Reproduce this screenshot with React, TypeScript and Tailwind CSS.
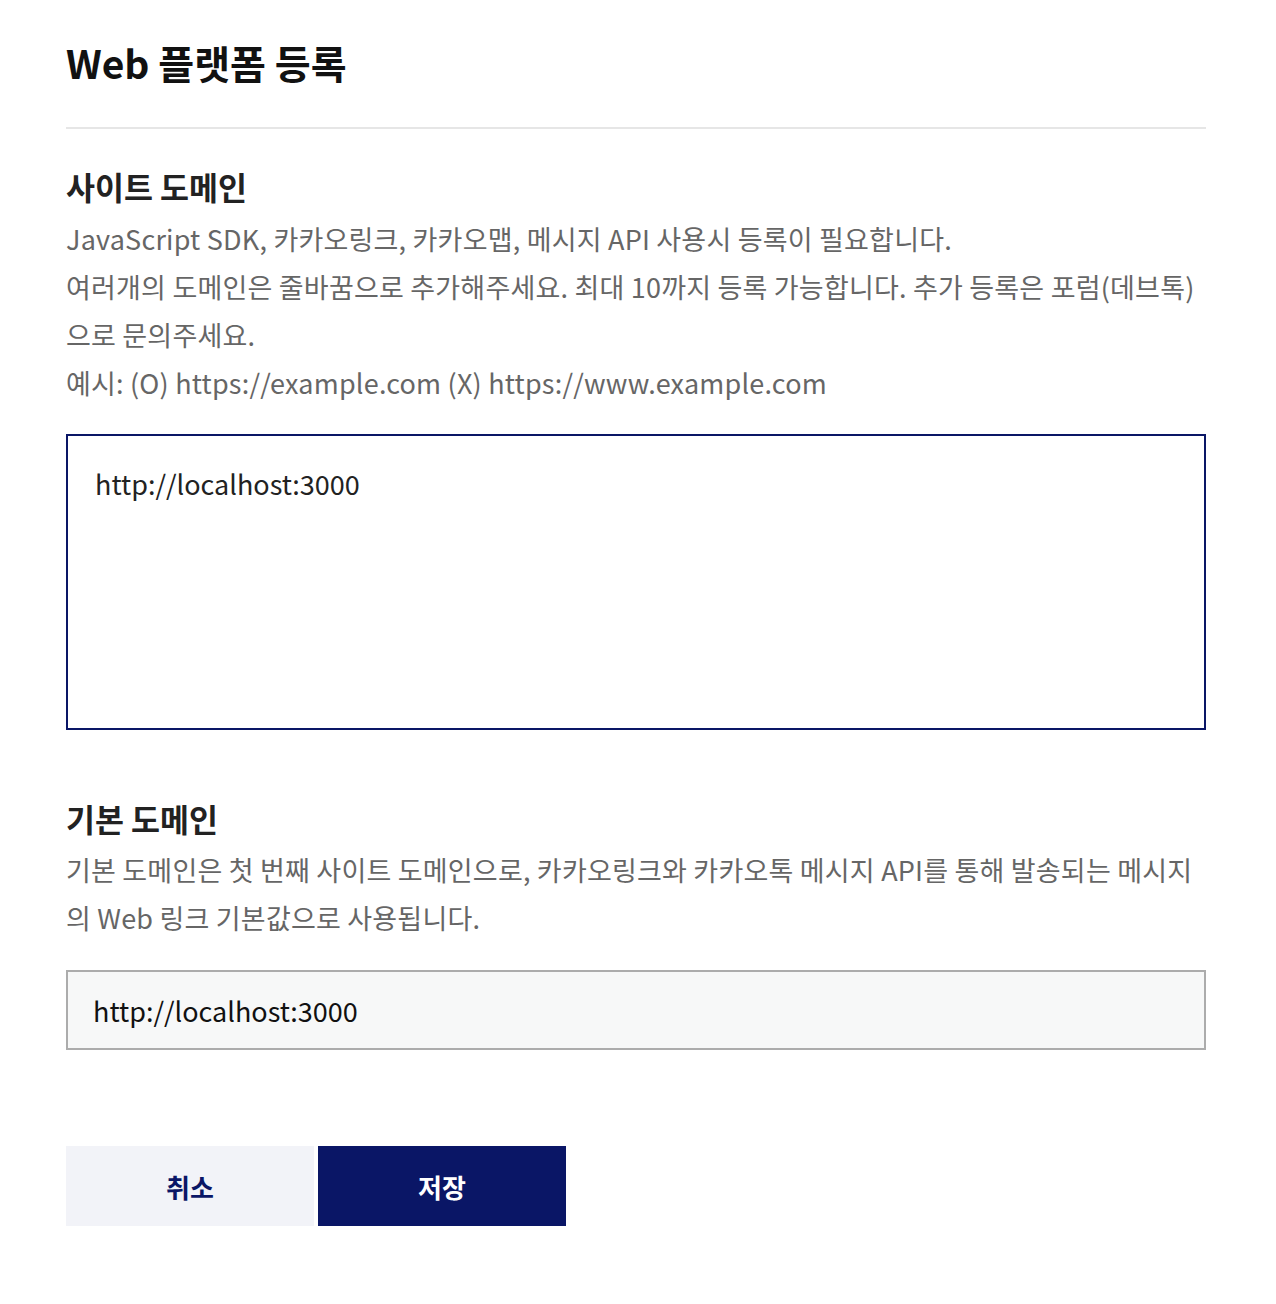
import { useState } from 'react'

const font = { fontFamily: '"Noto Sans CJK KR", "Noto Sans", sans-serif' }

export default function App() {
  const [sites, setSites] = useState('http://localhost:3000')
  const [defaultDomain, setDefaultDomain] = useState('http://localhost:3000')

  return (
    <div className="min-h-[1304px] w-[1276px] bg-white" style={font}>
      <div className="px-[66px] pt-9 w-[1272px]">
        <h1 className="text-[39px] leading-[52px] font-bold text-[#111]">
          Web 플랫폼 등록
        </h1>
        <div className="mt-[39px] h-[2px] bg-[#e6e6e6]" />

        <h2 className="mt-[37px] text-[31.5px] leading-[40px] font-bold text-[#222]">사이트 도메인</h2>
        <div className="mt-[9px] text-[27px] leading-[48px] text-[#666] tracking-[0.2px]">
          <p>JavaScript SDK, 카카오링크, 카카오맵, 메시지 API 사용시 등록이 필요합니다.</p>
          <p>
            여러개의 도메인은 줄바꿈으로 추가해주세요. 최대 10까지 등록 가능합니다. 추가 등록은 포럼(데브톡)으로 문의주세요.
          </p>
          <p>예시: (O) https://example.com (X) https://www.example.com</p>
        </div>

        <textarea
          value={sites}
          onChange={(e) => setSites(e.target.value)}
          className="mt-[27px] block w-full h-[296px] resize-none border-2 border-[#0a1666] px-[27px] py-[28px] text-[27px] leading-[40px] text-[#222] outline-none"
          style={font}
        />

        <h2 className="mt-[68px] text-[31.5px] leading-[40px] font-bold text-[#222]">기본 도메인</h2>
        <p className="mt-2 text-[27px] leading-[48px] text-[#666] tracking-[0.2px]">
          기본 도메인은 첫 번째 사이트 도메인으로, 카카오링크와 카카오톡 메시지 API를 통해 발송되는 메시지의 Web 링크 기본값으로 사용됩니다.
        </p>

        <input
          value={defaultDomain}
          onChange={(e) => setDefaultDomain(e.target.value)}
          className="mt-[28px] block w-full h-[80px] border-2 border-[#acacac] bg-[#f7f8f8] px-[25px] text-[27px] text-[#111] outline-none"
          style={font}
        />

        <div className="mt-[96px] flex gap-1">
          <button className="w-[248px] h-[80px] bg-[#f2f3f8] text-[#0a1666] text-[26px] font-bold">취소</button>
          <button className="w-[248px] h-[80px] bg-[#0a1666] text-white text-[26px] font-bold">저장</button>
        </div>
      </div>
    </div>
  )
}
